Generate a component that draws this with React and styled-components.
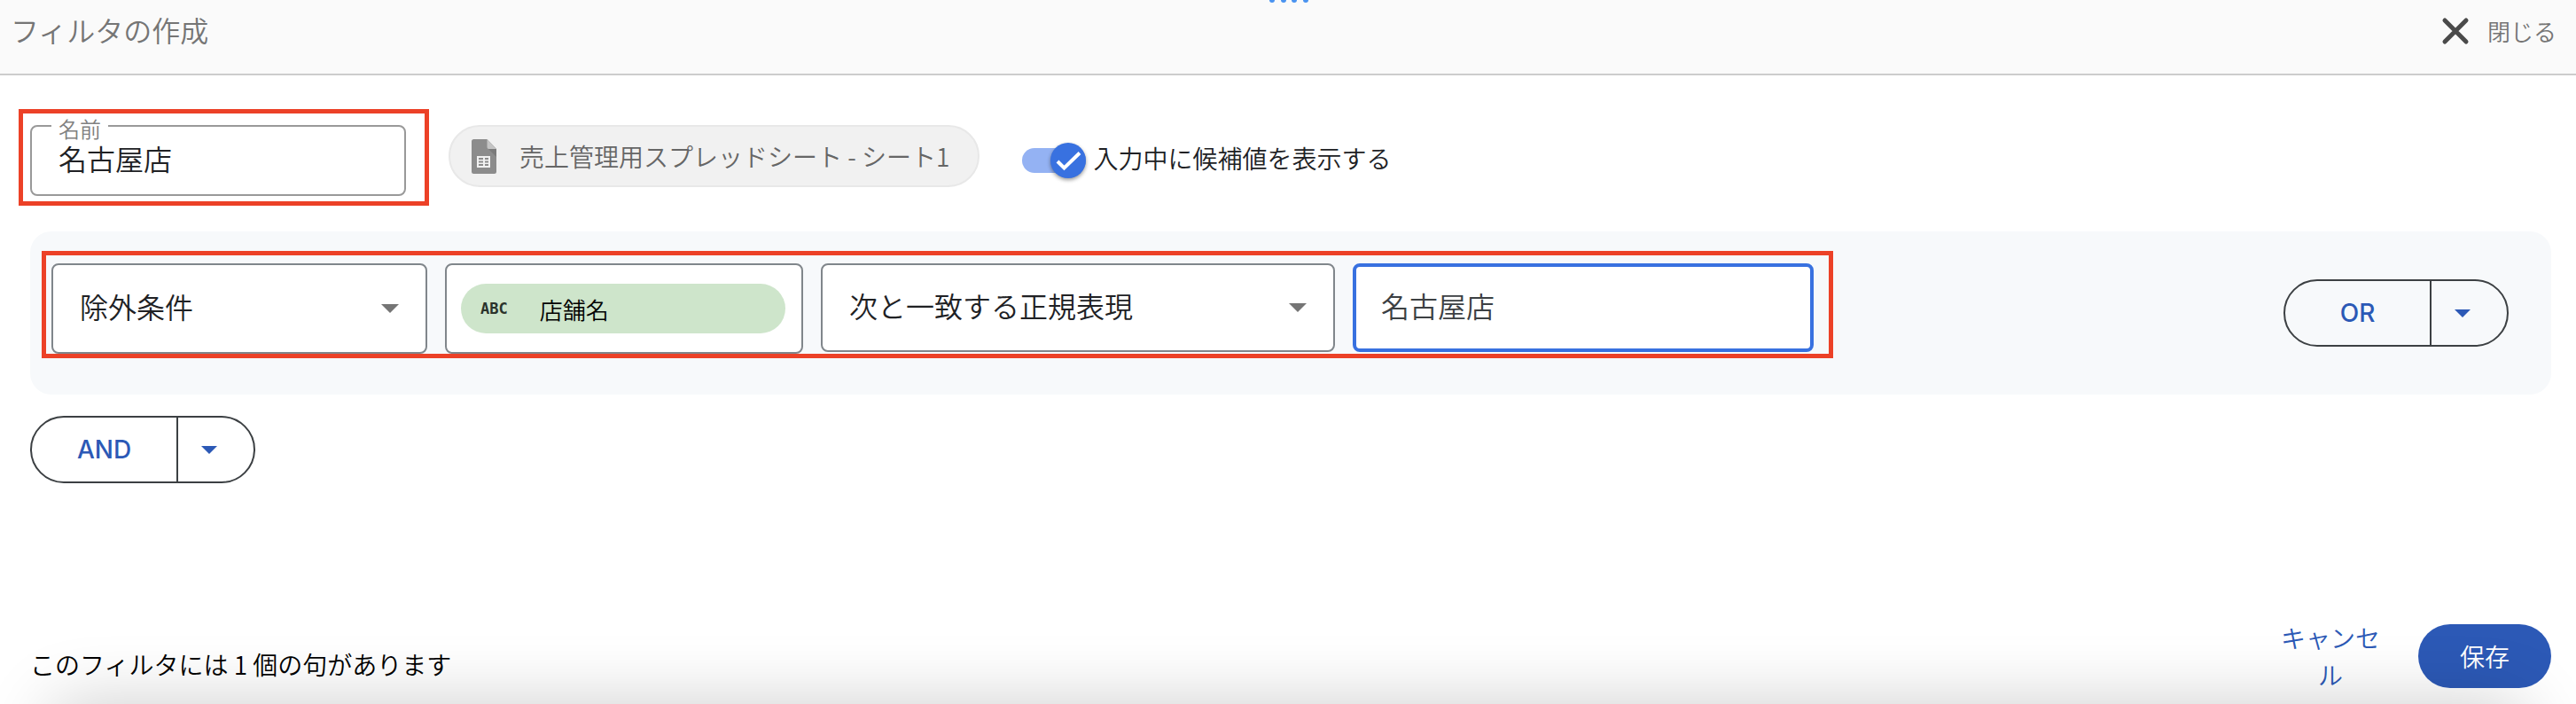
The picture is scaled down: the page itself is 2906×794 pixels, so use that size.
import React, { useState } from 'react'
import styled, { createGlobalStyle } from 'styled-components'

const GlobalStyle = createGlobalStyle`
    *, *::before, *::after {
        box-sizing: border-box;
    }
    body {
        margin: 0;
        background-color: #fff;
    }
    body, button, input, select {
        font-family: "Noto Sans CJK JP", "Noto Sans", sans-serif;
        font-weight: 350;
    }
`

const Container = styled.div`
    position: relative;
    min-height: 100vh;
    display: flex;
    flex-direction: column;
    overflow: hidden;
    color: #202124;
`

const Header = styled.header`
    position: relative;
    display: flex;
    align-items: flex-start;
    justify-content: space-between;
    height: 85px;
    padding: 12px 22px 0 12px;
    background-color: #fafafa;
    border-bottom: 2px solid #ccc;
`
const Title = styled.h1`
    margin: 0;
    font-size: 32px;
    font-weight: 350;
    line-height: 42px;
    color: #757575;
`
const CloseButton = styled.button`
    display: flex;
    align-items: center;
    gap: 20px;
    padding: 0;
    border: none;
    background: none;
    font-size: 26px;
    line-height: 46px;
    color: #757575;
    cursor: pointer;
`
const DragHandle = styled.svg`
    position: absolute;
    top: 0;
    left: 50%;
    transform: translateX(-50%);
`

const Main = styled.main`
    flex: 1;
    display: flex;
    flex-direction: column;
    align-items: flex-start;
    padding: 38px 28px 0 34px;
`
const TopRow = styled.div`
    display: flex;
    align-items: flex-start;
    margin-left: -13px;
`
const NameHighlight = styled.div`
    border: 5px solid #ec4127;
    padding: 13px 21px 6px 8px;
`
const NameField = styled.div`
    position: relative;
    width: 424px;
    height: 80px;
    border: 2px solid #999;
    border-radius: 8px;
`
const NameLabel = styled.label`
    position: absolute;
    top: -12px;
    left: 22px;
    padding: 0 8px;
    background-color: #fff;
    font-size: 24px;
    line-height: 28px;
    color: #808080;
`
const NameInput = styled.input`
    width: 100%;
    height: 100%;
    padding: 0 30px 6px;
    border: none;
    outline: none;
    background: none;
    font-size: 32px;
    color: #202124;
`
const SourceChip = styled.div`
    display: flex;
    align-items: center;
    gap: 26px;
    height: 70px;
    margin: 18px 0 0 22px;
    padding: 0 32px 0 24px;
    border: 2px solid #e8e8e8;
    border-radius: 35px;
    background-color: #f1f1f1;
    font-size: 28px;
    color: #666;
    white-space: nowrap;
`
const Toggle = styled.label`
    display: flex;
    align-items: center;
    gap: 8px;
    height: 80px;
    margin: 18px 0 0 48px;
    font-size: 28px;
    white-space: nowrap;
    cursor: pointer;
`
const ToggleText = styled.span`
    padding-bottom: 6px;
`
const ToggleInput = styled.input`
    appearance: none;
    position: absolute;
    inset: 0;
    width: 100%;
    height: 100%;
    margin: 0;
    opacity: 0;
    cursor: pointer;
`
const Track = styled.span`
    position: relative;
    display: flex;
    align-items: center;
    justify-content: ${props => props.$on ? 'flex-end' : 'flex-start'};
    width: 72px;
    height: 28px;
    border-radius: 14px;
    background-color: ${props => props.$on ? '#94b2f3' : '#bdbdbd'};
`
const Knob = styled.span`
    display: flex;
    flex-shrink: 0;
    width: 40px;
    height: 40px;
    border-radius: 50%;
    background-color: ${props => props.$on ? '#3871e0' : '#fafafa'};
    box-shadow: 0 2px 4px rgba(0, 0, 0, 0.4);
`

const Clause = styled.section`
    display: flex;
    align-items: center;
    justify-content: space-between;
    align-self: stretch;
    margin: 29px 0 24px;
    padding-right: 48px;
    border-radius: 24px;
    background-color: #f7f9fb;
`
const ClauseHighlight = styled.div`
    display: flex;
    align-items: flex-start;
    gap: 20px;
    margin: 22px 0 41px 13px;
    border: 5px solid #ec4127;
    padding: 9px 17px 0 6px;
`
const SelectBox = styled.div`
    display: grid;
    align-items: center;
    width: ${props => props.$width};
    height: ${props => props.$height};
    border: 2px solid #80868b;
    border-radius: 8px;
    background-color: #fff;
    > * {
        grid-area: 1 / 1;
    }
    > svg {
        justify-self: end;
        margin-right: 30px;
        pointer-events: none;
    }
`
const Select = styled.select`
    appearance: none;
    width: 100%;
    height: 100%;
    padding: 0 70px 6px 30px;
    border: none;
    outline: none;
    background: none;
    font-size: 32px;
    color: #202124;
`
const FieldBox = styled.div`
    display: flex;
    align-items: center;
    width: 404px;
    height: 102px;
    padding: 0 18px 0 16px;
    border: 2px solid #80868b;
    border-radius: 8px;
    background-color: #fff;
`
const FieldChip = styled.button`
    flex: 1;
    display: flex;
    align-items: center;
    gap: 36px;
    height: 56px;
    padding: 0 22px;
    border: none;
    border-radius: 28px;
    background-color: #cee5cb;
    font-size: 26px;
    color: #000;
    cursor: pointer;
`
const FieldType = styled.span`
    font-family: "DejaVu Sans Mono", monospace;
    font-size: 17px;
    font-weight: 700;
    color: #2b332b;
`
const ValueInput = styled.input`
    width: 520px;
    height: 100px;
    padding: 0 28px 6px;
    border: 4px solid #3871e0;
    border-radius: 8px;
    outline: none;
    background-color: #fff;
    font-size: 32px;
    color: #3c4043;
`

const SplitButton = styled.div`
    display: flex;
    flex-shrink: 0;
    width: 254px;
    height: 76px;
    border: 2px solid #3c4043;
    border-radius: 38px;
    overflow: hidden;
`
const SplitMain = styled.button`
    flex: 1;
    padding: 0;
    border: none;
    border-right: 2px solid #3c4043;
    background: none;
    font-family: Inter, "Noto Sans", sans-serif;
    font-size: 28px;
    font-weight: 500;
    color: #2c59b6;
    cursor: pointer;
`
const SplitMenu = styled.button`
    display: flex;
    align-items: center;
    width: 85px;
    padding: 0 0 0 26px;
    border: none;
    background: none;
    cursor: pointer;
`

const Footer = styled.footer`
    display: flex;
    align-items: center;
    justify-content: space-between;
    padding: 0 28px 12px 34px;
`
const ClauseCount = styled.p`
    margin: 0;
    padding-top: 18px;
    font-size: 28px;
    line-height: 42px;
    color: #000;
`
const Actions = styled.div`
    display: flex;
    align-items: center;
    gap: 39px;
`
const CancelButton = styled.button`
    width: 120px;
    padding: 0;
    border: none;
    background: none;
    font-size: 28px;
    line-height: 42px;
    color: #2c59b6;
    cursor: pointer;
`
const SaveButton = styled.button`
    width: 150px;
    height: 72px;
    padding: 0;
    border: none;
    border-radius: 36px;
    background-color: #2c59b6;
    font-size: 28px;
    color: #fff;
    cursor: pointer;
`
const BottomShade = styled.div`
    position: absolute;
    left: 0;
    right: 0;
    bottom: 0;
    height: 100px;
    overflow: hidden;
    pointer-events: none;
    &::after {
        content: "";
        position: absolute;
        top: 100%;
        left: 60px;
        right: 60px;
        height: 100px;
        box-shadow: 0 0 80px rgba(0, 0, 0, 0.2);
    }
`

const Caret = ({ color, width }) => (
    <svg width={width} height={width / 2} viewBox="0 0 20 10" aria-hidden="true">
        <path d="M0 0h20L10 10z" fill={color} />
    </svg>
)

const CloseIcon = () => (
    <svg width="32" height="32" viewBox="0 0 32 32" aria-hidden="true">
        <path d="M4 4l24 24M28 4L4 28" stroke="#4a4a4a" strokeWidth="5" strokeLinecap="round" />
    </svg>
)

const SheetIcon = () => (
    <svg width="28" height="39" viewBox="0 0 28 39" aria-hidden="true">
        <path d="M2.500 0H17.500L28 11V36.500A2.500 2.500 0 0 1 25.500 39H2.500A2.500 2.500 0 0 1 0 36.500V2.500A2.500 2.500 0 0 1 2.500 0z" fill="#8c8c8c" />
        <path d="M19 11h9v9z" fill="#7b7b7b" />
        <path d="M17.500 0L28 11h-8.500a2 2 0 0 1-2-2z" fill="#c4c4c4" />
        <path d="M6 19h15v13H6z" fill="#f1f1f1" />
        <path d="M8 21h5v2H8zM15 21h4v2h-4zM8 24.500h5v2H8zM15 24.500h4v2h-4zM8 28h5v2H8zM15 28h4v2h-4z" fill="#8c8c8c" />
    </svg>
)

const Split = ({ text }) => (
    <SplitButton>
        <SplitMain type="button">{text}</SplitMain>
        <SplitMenu type="button" aria-label={text}>
            <Caret color="#2c59b6" width={18} />
        </SplitMenu>
    </SplitButton>
)

const App = () => {
    const [name, setName] = useState('名古屋店')
    const [value, setValue] = useState('名古屋店')
    const [suggest, setSuggest] = useState(true)

    return (
        <Container>
            <GlobalStyle />
            <Header>
                <Title>フィルタの作成</Title>
                <DragHandle width="46" height="4" viewBox="0 0 46 4" aria-hidden="true">
                    <g fill="#4a93f0">
                        <circle cx="5" cy="0" r="3" />
                        <circle cx="18" cy="0" r="3" />
                        <circle cx="30" cy="0" r="3" />
                        <circle cx="43" cy="0" r="3" />
                    </g>
                </DragHandle>
                <CloseButton type="button">
                    <CloseIcon />
                    閉じる
                </CloseButton>
            </Header>

            <Main>
                <TopRow>
                    <NameHighlight>
                        <NameField>
                            <NameLabel htmlFor="filter-name">名前</NameLabel>
                            <NameInput id="filter-name" value={name} onChange={e => setName(e.target.value)} />
                        </NameField>
                    </NameHighlight>
                    <SourceChip>
                        <SheetIcon />
                        売上管理用スプレッドシート - シート1
                    </SourceChip>
                    <Toggle>
                        <Track $on={suggest}>
                            <ToggleInput type="checkbox" checked={suggest} onChange={e => setSuggest(e.target.checked)} />
                            <Knob $on={suggest}>
                                {suggest && (
                                    <svg width="40" height="40" viewBox="0 0 40 40" aria-hidden="true">
                                        <path d="M8 21l7.500 7.500L33 11.500" fill="none" stroke="#fff" strokeWidth="4" />
                                    </svg>
                                )}
                            </Knob>
                        </Track>
                        <ToggleText>入力中に候補値を表示する</ToggleText>
                    </Toggle>
                </TopRow>

                <Clause>
                    <ClauseHighlight>
                        <SelectBox $width="424px" $height="102px">
                            <Select aria-label="除外条件">
                                <option>除外条件</option>
                            </Select>
                            <Caret color="#757575" width={20} />
                        </SelectBox>
                        <FieldBox>
                            <FieldChip type="button">
                                <FieldType>ABC</FieldType>
                                店舗名
                            </FieldChip>
                        </FieldBox>
                        <SelectBox $width="580px" $height="100px">
                            <Select aria-label="次と一致する正規表現">
                                <option>次と一致する正規表現</option>
                            </Select>
                            <Caret color="#757575" width={20} />
                        </SelectBox>
                        <ValueInput aria-label="店舗名" value={value} onChange={e => setValue(e.target.value)} />
                    </ClauseHighlight>
                    <Split text="OR" />
                </Clause>

                <Split text="AND" />
            </Main>

            <Footer>
                <ClauseCount>このフィルタには 1 個の句があります</ClauseCount>
                <Actions>
                    <CancelButton type="button">キャンセル</CancelButton>
                    <SaveButton type="button">保存</SaveButton>
                </Actions>
            </Footer>
            <BottomShade />
        </Container>
    )
}

export default App
